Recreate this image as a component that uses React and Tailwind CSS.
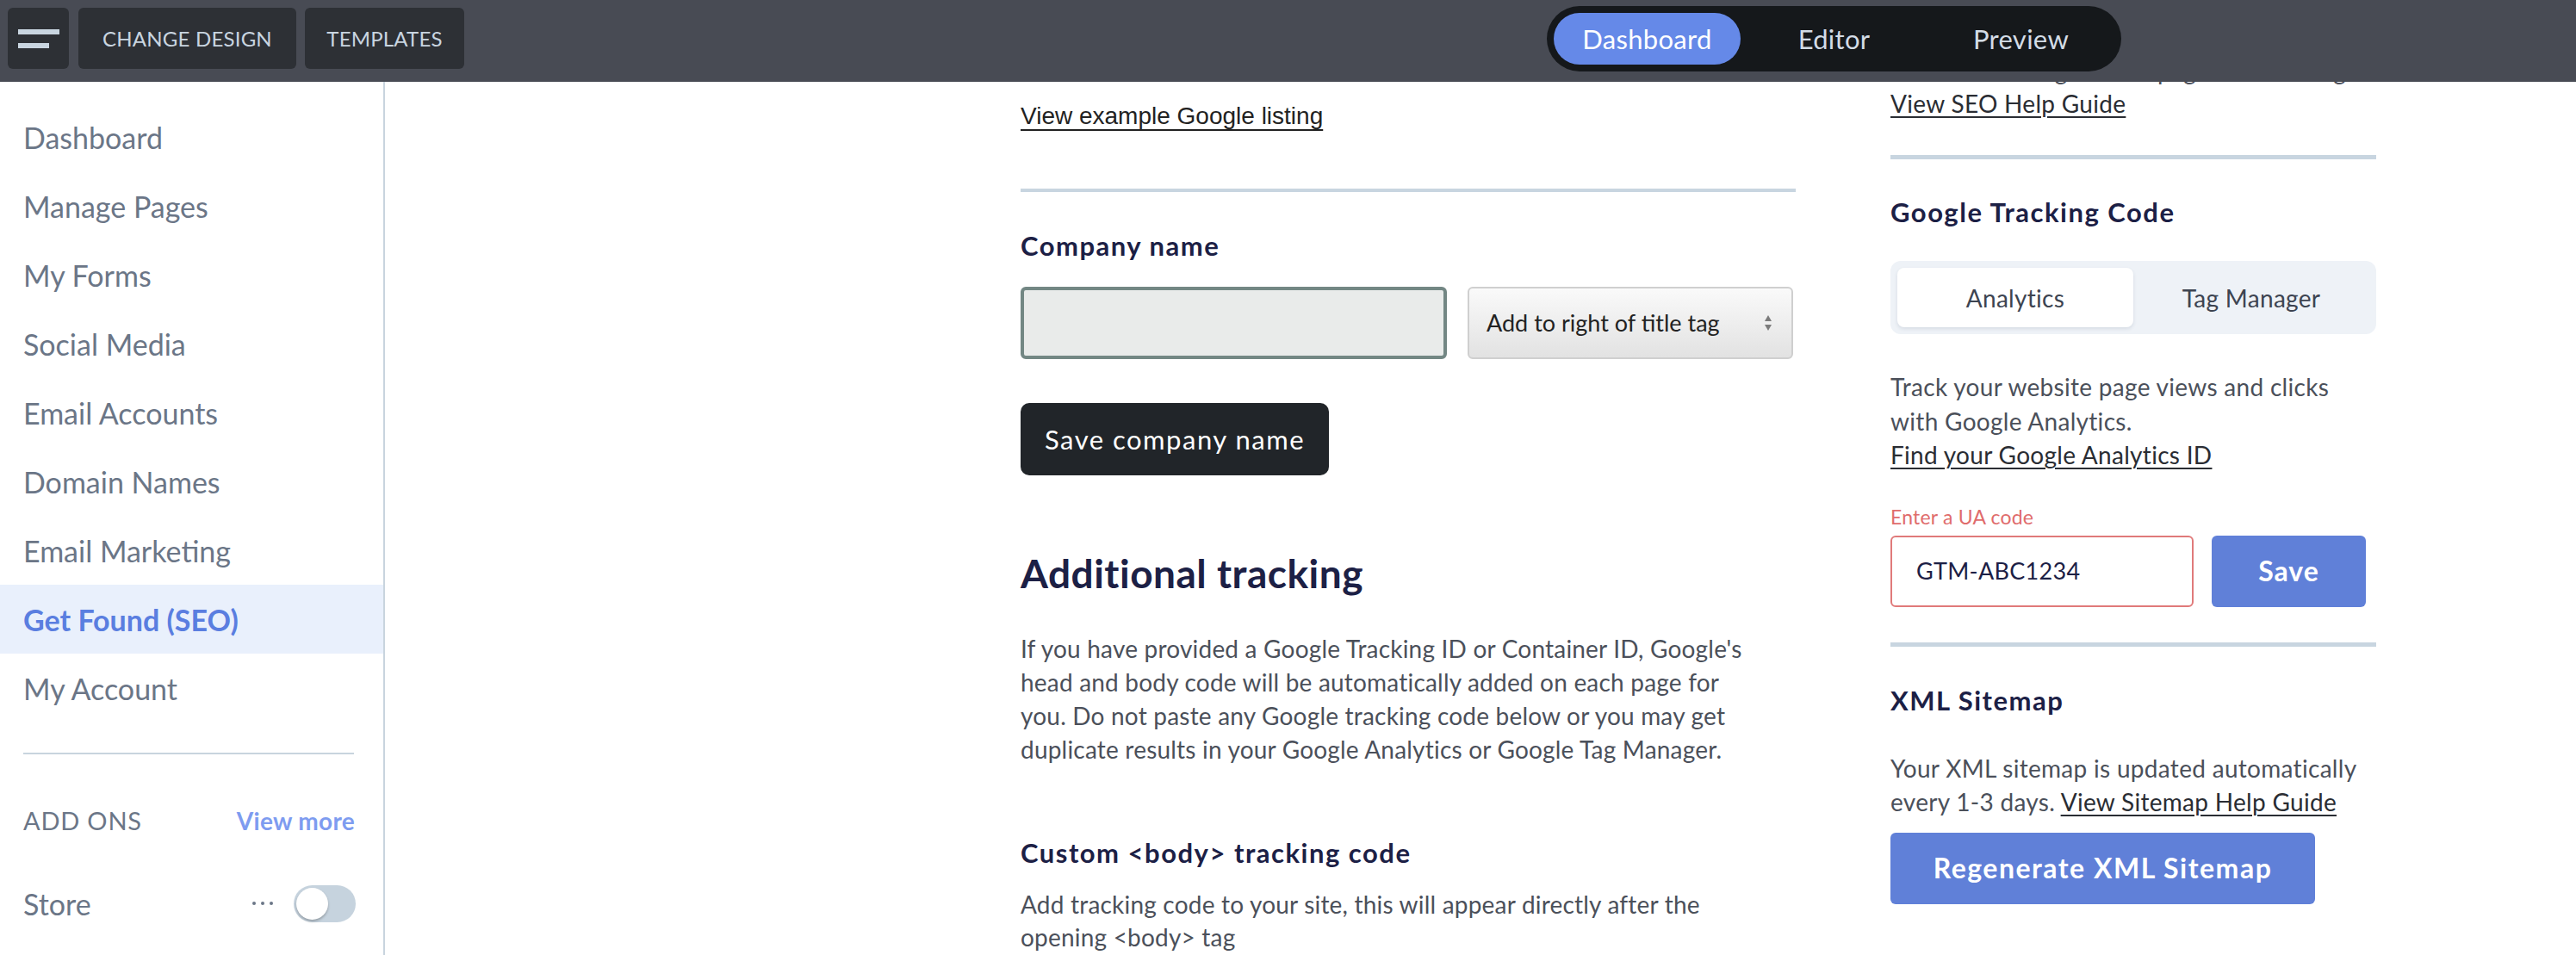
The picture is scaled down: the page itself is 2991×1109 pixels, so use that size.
import React from "react";

const navItems = [
  "Dashboard",
  "Manage Pages",
  "My Forms",
  "Social Media",
  "Email Accounts",
  "Domain Names",
  "Email Marketing",
  "Get Found (SEO)",
  "My Account",
];

function Header() {
  return (
    <header className="relative z-10 flex h-[95px] shrink-0 items-start bg-[#484b54] pl-[9px] pt-[9px]">
      <button className="flex h-[71px] w-[71px] flex-col justify-center gap-[10px] rounded-[6px] bg-[#2d3035] pl-[12px]">
        <span className="block h-[6px] w-[48px] bg-[#c9d5e0]" />
        <span className="block h-[6px] w-[36px] bg-[#c9d5e0]" />
      </button>
      <button className="ml-[11px] flex h-[71px] w-[253px] items-center justify-center rounded-[6px] bg-[#2d3035] text-[24px] tracking-[0.2px] text-[#c9d5e0]">
        CHANGE DESIGN
      </button>
      <button className="ml-[10px] flex h-[71px] w-[185px] items-center justify-center rounded-[6px] bg-[#2d3035] text-[24px] tracking-[0.2px] text-[#c9d5e0]">
        TEMPLATES
      </button>
      <div className="-mt-[2px] ml-[1257px] flex h-[76px] items-center rounded-full bg-[#15181b] px-[8px]">
        <div className="flex h-[60px] w-[217px] items-center justify-center rounded-full bg-[#6589e8] text-[31px] tracking-[0.3px] text-white">
          Dashboard
        </div>
        <div className="flex h-[60px] w-[217px] items-center justify-center text-[31px] tracking-[0.3px] text-[#d3dce6]">
          Editor
        </div>
        <div className="flex h-[60px] w-[217px] items-center justify-center text-[31px] tracking-[0.3px] text-[#d3dce6]">
          Preview
        </div>
      </div>
    </header>
  );
}

function Sidebar() {
  return (
    <aside className="flex w-[447px] shrink-0 flex-col border-r-2 border-[#c8d4de] pt-[24px]">
      {navItems.map((item) =>
        item === "Get Found (SEO)" ? (
          <div
            key={item}
            className="flex h-[80px] items-center bg-[#e9f0fc] pl-[27px] text-[34px] font-bold text-[#5a7ee0]"
          >
            {item}
          </div>
        ) : (
          <div
            key={item}
            className="flex h-[80px] items-center pl-[27px] text-[34px] text-[#6b7687]"
          >
            {item}
          </div>
        )
      )}
      <div className="ml-[27px] mt-[35px] h-[2px] w-[384px] bg-[#c8d4de]" />
      <div className="mt-[37px] flex h-[80px] items-center justify-between pl-[27px] pr-[33px]">
        <span className="text-[29px] tracking-[0.8px] text-[#6b7687]">ADD ONS</span>
        <span className="text-[28px] font-bold tracking-[0.3px] text-[#7e9cf0]">View more</span>
      </div>
      <div className="mt-[16px] flex h-[80px] items-center justify-between pl-[27px] pr-[32px]">
        <span className="text-[34px] text-[#6b7687]">Store</span>
        <div className="flex items-center gap-[24px]">
          <div className="flex items-center gap-[6px]">
            <span className="block h-[4px] w-[4px] rounded-full bg-[#6b7687]" />
            <span className="block h-[4px] w-[4px] rounded-full bg-[#6b7687]" />
            <span className="block h-[4px] w-[4px] rounded-full bg-[#6b7687]" />
          </div>
          <div className="flex h-[43px] w-[72px] items-center rounded-full bg-[#c6d3de] pl-[3px]">
            <span className="block h-[37px] w-[37px] rounded-full bg-white shadow-[0_2px_3px_rgba(0,0,0,0.25)]" />
          </div>
        </div>
      </div>
    </aside>
  );
}

function SelectArrows() {
  return (
    <svg width="10" height="20" viewBox="0 0 10 20" className="shrink-0">
      <path d="M5 1 L9 8 L1 8 Z" fill="#7b7b7b" />
      <path d="M1 12 L9 12 L5 19 Z" fill="#7b7b7b" />
    </svg>
  );
}

function CenterColumn() {
  return (
    <div className="w-[900px] shrink-0">
      <a className="mt-[21px] block w-fit font-['Liberation_Sans',Arial,sans-serif] text-[28px] leading-[38px] text-[#222] underline decoration-[2px] underline-offset-[6px]">
        View example Google listing
      </a>
      <div className="mt-[65px] h-[4px] w-full bg-[#c8d5e0]" />
      <h3 className="mt-[43px] text-[31px] font-bold leading-[38px] tracking-[1.5px] text-[#1c2045]">
        Company name
      </h3>
      <div className="mt-[29px] flex gap-[24px]">
        <div className="h-[84px] w-[495px] rounded-[6px] border-[4px] border-[#738784] bg-[#e9ebea]" />
        <div className="flex h-[84px] w-[378px] items-center justify-between rounded-[6px] border-2 border-[#cfcfcf] bg-gradient-to-b from-[#fafafa] to-[#e2e2e2] pl-[20px] pr-[22px]">
          <span className="text-[27px] text-[#222]">Add to right of title tag</span>
          <SelectArrows />
        </div>
      </div>
      <button className="mt-[51px] flex h-[84px] w-[358px] items-center justify-center rounded-[10px] bg-[#212529] text-[31px] tracking-[1.5px] text-white">
        Save company name
      </button>
      <h2 className="mt-[89px] text-[46px] font-bold leading-[50px] tracking-[0.5px] text-[#1c2045]">
        Additional tracking
      </h2>
      <p className="mt-[43px] whitespace-nowrap text-[28px] leading-[39px] tracking-[0.2px] text-[#4b505a]">
        If you have provided a Google Tracking ID or Container ID, Google's
        <br />
        head and body code will be automatically added on each page for
        <br />
        you. Do not paste any Google tracking code below or you may get
        <br />
        duplicate results in your Google Analytics or Google Tag Manager.
      </p>
      <h3 className="mt-[81px] text-[31px] font-bold leading-[38px] tracking-[1.5px] text-[#1c2045]">
        Custom &lt;body&gt; tracking code
      </h3>
      <p className="mt-[23px] whitespace-nowrap text-[28px] leading-[37.5px] tracking-[0.2px] text-[#4b505a]">
        Add tracking code to your site, this will appear directly after the
        <br />
        opening &lt;body&gt; tag
      </p>
    </div>
  );
}

function RightColumn() {
  return (
    <div className="-mt-[32px] w-[564px] shrink-0 text-[28px] tracking-[0.3px] text-[#4b505a]">
      <p className="whitespace-nowrap leading-[38px]">Learn how Google ranks pages and settings</p>
      <a className="block w-fit leading-[38px] text-[#2a2d33] underline decoration-[2px] underline-offset-[4px]">
        View SEO Help Guide
      </a>
      <div className="mt-[41px] h-[5px] w-full bg-[#c8d5e0]" />
      <h3 className="mt-[41px] text-[31px] font-bold leading-[40px] tracking-[1.5px] text-[#1c2045]">
        Google Tracking Code
      </h3>
      <div className="mt-[37px] grid h-[85px] grid-cols-2 rounded-[12px] bg-[#eef2f7] p-[8px]">
        <div className="flex items-center justify-center rounded-[8px] bg-white text-[28px] text-[#3d4451] shadow-[0_2px_4px_rgba(40,60,90,0.12)]">
          Analytics
        </div>
        <div className="flex items-center justify-center text-[28px] text-[#3d4451]">Tag Manager</div>
      </div>
      <p className="mt-[42px] whitespace-nowrap leading-[39.5px]">
        Track your website page views and clicks
        <br />
        with Google Analytics.
        <br />
        <a className="text-[#2a2d33] underline decoration-[2px] underline-offset-[4px]">
          Find your Google Analytics ID
        </a>
      </p>
      <div className="mt-[36px] text-[23px] leading-[30px] tracking-[0.2px] text-[#e06c6c]">Enter a UA code</div>
      <div className="mt-[7px] flex gap-[21px]">
        <div className="flex h-[83px] w-[352px] items-center rounded-[6px] border-2 border-[#e07a7a] bg-white pl-[28px] text-[27px] text-[#1c2045]">
          GTM-ABC1234
        </div>
        <button className="flex h-[83px] w-[179px] items-center justify-center rounded-[6px] bg-[#6080d8] text-[32px] font-bold tracking-[1px] text-white">
          Save
        </button>
      </div>
      <div className="mt-[41px] h-[5px] w-full bg-[#c8d5e0]" />
      <h3 className="mt-[42px] text-[31px] font-bold leading-[40px] tracking-[1.5px] text-[#1c2045]">XML Sitemap</h3>
      <p className="mt-[40px] whitespace-nowrap leading-[39px]">
        Your XML sitemap is updated automatically
        <br />
        every 1-3 days.{" "}
        <a className="text-[#2a2d33] underline decoration-[2px] underline-offset-[4px]">View Sitemap Help Guide</a>
      </p>
      <button className="mt-[16px] flex h-[83px] w-[493px] items-center justify-center rounded-[6px] bg-[#6080d8] text-[32px] font-bold tracking-[1.5px] text-white">
        Regenerate XML Sitemap
      </button>
    </div>
  );
}

export default function App() {
  return (
    <div className="flex h-[1109px] w-[2991px] flex-col overflow-hidden bg-white font-['Lato',sans-serif]">
      <Header />
      <div className="flex min-h-0 flex-1">
        <Sidebar />
        <main className="min-w-0 flex-1 overflow-hidden">
          <div className="flex gap-[110px] pl-[738px]">
            <CenterColumn />
            <RightColumn />
          </div>
        </main>
      </div>
    </div>
  );
}
